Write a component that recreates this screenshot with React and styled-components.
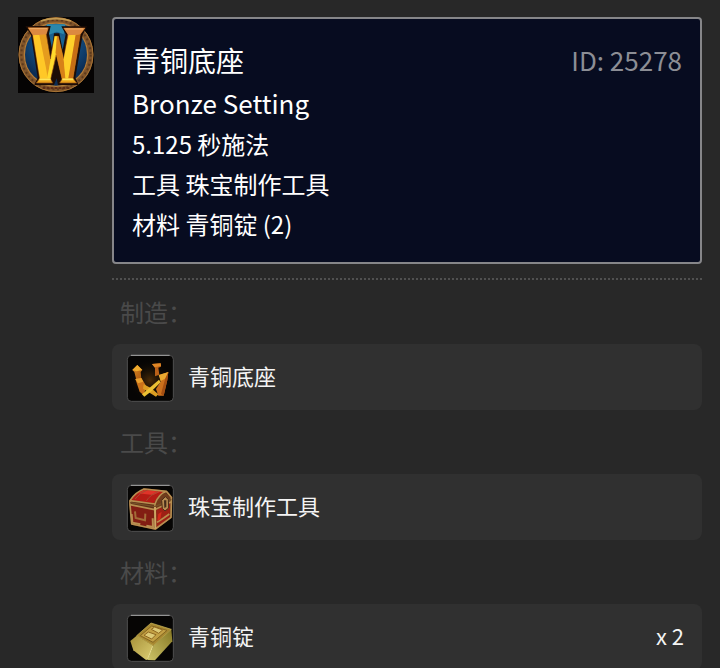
import styled, { createGlobalStyle } from 'styled-components';

const GlobalStyle = createGlobalStyle`
  * {
    box-sizing: border-box;
  }
  body {
    margin: 0;
    background-color: #282828;
    color: #ffffff;
    font-family: 'Noto Sans CJK SC', 'Noto Sans', sans-serif;
  }
`;

const StyledPage = styled.main`
  display: flex;
  align-items: flex-start;
  gap: 18px;
  padding: 17px 18px 0 18px;
`;

const StyledLogo = styled.svg`
  flex: none;
  width: 76px;
  height: 76px;
`;

const StyledContent = styled.div`
  flex: 1;
  min-width: 0;
`;

const StyledTooltip = styled.section`
  padding: 20px 18px 18px 18px;
  border: 2px solid #868689;
  border-radius: 4px;
  background-color: #070c20;
`;

const StyledTooltipHeader = styled.header`
  display: flex;
  justify-content: space-between;
`;

const StyledName = styled.h1`
  margin: 0;
  font-size: 28px;
  font-weight: 400;
  line-height: 42px;
`;

const StyledId = styled.span`
  color: #8c8e95;
  font-size: 26px;
  line-height: 42px;
`;

const StyledEnglishName = styled.p`
  margin: 0;
  font-size: 26px;
  line-height: 43px;
`;

const StyledDetail = styled.p`
  margin: 0;
  font-size: 24px;
  line-height: 40px;
`;

const StyledDivider = styled.hr`
  margin: 14px 0 0 0;
  border: none;
  height: 2px;
  background: repeating-linear-gradient(
    90deg,
    #505050 0 2px,
    transparent 2px 4px
  );
`;

const StyledLabel = styled.h2`
  margin: 0;
  padding: 12px 8px;
  color: #4a4a4a;
  font-size: 24px;
  font-weight: 400;
  line-height: 40px;
`;

const StyledRow = styled.a`
  display: flex;
  align-items: flex-start;
  gap: 14px;
  padding: 10px 18px 8px 14px;
  border-radius: 8px;
  background-color: #303030;
  color: #f4f4f4;
  font-size: 22px;
  line-height: 42px;
  text-decoration: none;
`;

const StyledItemIcon = styled.svg`
  flex: none;
  width: 48px;
  height: 48px;
`;

const StyledItemName = styled.span`
  flex: 1;
`;

function Logo() {
  return (
    <StyledLogo viewBox="6 6 228 228" role="img" aria-label="W">
      <defs>
        <linearGradient id="gold" x1="0" y1="0" x2="0" y2="1">
          <stop offset="0" stopColor="#e08a35" />
          <stop offset="0.3" stopColor="#f0a422" />
          <stop offset="0.7" stopColor="#f9cd22" />
          <stop offset="1" stopColor="#eaa01c" />
        </linearGradient>
        <radialGradient id="sea" cx="0.5" cy="0.3" r="0.6">
          <stop offset="0" stopColor="#1b6c9a" />
          <stop offset="0.6" stopColor="#124a7c" />
          <stop offset="1" stopColor="#0b2d55" />
        </radialGradient>
      </defs>
      <rect x="6" y="6" width="228" height="228" fill="#050303" />
      <circle cx="120" cy="119" r="104" fill="none" stroke="#80542a" strokeWidth="16" />
      <circle cx="120" cy="119" r="104" fill="none" stroke="#5d3b1d" strokeWidth="6" strokeDasharray="6 8" />
      <circle cx="120" cy="119" r="111" fill="none" stroke="#a87435" strokeWidth="3" />
      <circle cx="120" cy="119" r="95" fill="url(#sea)" stroke="#b27b38" strokeWidth="4" />
      <path d="M75 18 Q120 4 165 18" fill="none" stroke="#c39b53" strokeWidth="5" />
      <path d="M92 28 L148 28 L143 58 L122 50 L98 60Z" fill="#2b87ab" />
      <path
        d="M28 33 L104 33 L99 56 L108 100 L114 55 L130 55 L140 104 L149 58 L136 34 L213 34 L200 60 L178 188 L188 210 L126 210 L122 190 L114 210 L55 210 L65 188 L45 60Z"
        fill="#1d0d06"
      />
      <path
        d="M36 38 L97 38 L91 58 L103 132 L116 64 L127 64 L143 132 L156 57 L143 39 L207 39 L193 58 L171 190 L182 204 L131 204 L138 192 L121 120 L104 192 L110 204 L61 204 L71 190 L50 60Z"
        fill="url(#gold)"
        stroke="#8b4812"
        strokeWidth="2"
      />
      <path d="M51 60 L76 60 L94 190 L72 190Z" fill="#ffc827" />
      <path d="M70 60 L88 60 L103 134 L96 188Z" fill="#e59c1e" />
      <path d="M116 64 L123 64 L119 112 L103 190 L93 190 L105 132Z" fill="#ffda2d" />
      <path d="M123 64 L127 64 L143 132 L150 190 L138 191 L119 112Z" fill="#d78218" />
      <path d="M158 60 L179 60 L158 190 L148 190 L143 132Z" fill="#ffd02a" />
      <path d="M179 60 L193 58 L171 190 L157 190Z" fill="#c66e16" />
      <path d="M36 38 L97 38 L91 57 L51 61Z M143 39 L207 39 L193 58 L157 61Z" fill="#dc8940" />
      <path d="M40 41 L93 41 M148 42 L201 42" stroke="#eeb06d" strokeWidth="3" />
      <path d="M70 193 L104 193 M139 193 L172 193" stroke="#ffe75a" strokeWidth="5" />
      <path d="M80 219 L160 219" stroke="#5d2c16" strokeWidth="6" strokeDasharray="8 4" />
    </StyledLogo>
  );
}

// Shared black tile that every item drawing sits on
function ItemIcon({ children }) {
  return (
    <StyledItemIcon viewBox="48 42 144 144" aria-hidden="true">
      <rect x="52" y="46" width="138" height="138" rx="12" fill="#060504" stroke="#505050" strokeWidth="3" />
      <path d="M63 46 L179 46" stroke="#a5a5a5" strokeWidth="3" />
      {children}
    </StyledItemIcon>
  );
}

function SettingIcon() {
  return (
    <ItemIcon>
      <defs>
        <radialGradient id="glow">
          <stop offset="0" stopColor="#4b2c08" />
          <stop offset="1" stopColor="#060504" stopOpacity="0" />
        </radialGradient>
        <linearGradient id="amber" x1="0" y1="0" x2="1" y2="1">
          <stop offset="0" stopColor="#dc8e24" />
          <stop offset="1" stopColor="#a9540f" />
        </linearGradient>
      </defs>
      <ellipse cx="120" cy="121" rx="65" ry="64" fill="url(#glow)" />
      <path d="M67 90 L82 75 L97 90 L92 96 L94 117 L79 119 L73 96Z" fill="url(#amber)" />
      <path d="M67 90 L82 75 L97 90 L80 94Z" fill="#f0ab2d" />
      <path d="M126 72 L152 70 L153 80 L145 83 L148 104 L135 109 L135 84Z" fill="#b96018" />
      <path d="M126 72 L152 70 L153 78 L134 82Z" fill="#df8726" />
      <path d="M76 117 L94 114 L109 139 L101 166 L89 155Z" fill="#cb721a" />
      <path d="M76 117 L94 114 L100 125 L84 130Z" fill="#e9a12f" />
      <path d="M148 105 L175 96 L172 120 L161 167 L145 167 L138 147 L152 125Z" fill="#cb701c" />
      <path d="M146 105 L175 96 L168 115 L152 123Z" fill="#eaa930" />
      <path d="M166 115 L175 96 L172 120 L161 167 L153 162Z" fill="#a34e12" />
      <path d="M101 133 L124 145 L145 163 L138 170 L115 156 L99 146Z" fill="#dc9d22" />
      <path d="M96 163 L147 119 L152 127 L126 152 L103 170Z" fill="#ecc033" />
    </ItemIcon>
  );
}

function ChestIcon() {
  return (
    <ItemIcon>
      <path d="M57 92 L101 54 L171 62 L187 82 L185 143 L136 180 L64 164Z" fill="#5e3018" />
      <path d="M63 91 Q78 62 104 58 L167 65 Q145 73 132 100Z" fill="#b51c15" />
      <path d="M83 70 L104 60 L151 65 L129 75Z" fill="#df3329" />
      <path d="M61 106 L131 120 L132 174 L67 160Z" fill="#821d13" />
      <path d="M139 120 L181 98 L179 143 L139 173Z" fill="#9e2015" />
      <path d="M138 101 Q145 77 166 69 L182 83 L180 95 L139 115Z" fill="#713c1c" />
      <path
        d="M60 92 Q74 68 102 57 L169 64 Q145 73 135 102Z M60 92 L60 104 L134 119 L135 102 M134 119 L184 95 L183 142 L136 177 L65 162 L60 104 M169 64 L184 82 L184 95"
        fill="none"
        stroke="#b78e50"
        strokeWidth="5"
        strokeLinejoin="round"
      />
      <path d="M75 87 Q91 66 112 60 M109 93 Q120 75 144 65" fill="none" stroke="#a34b30" strokeWidth="3" />
      <path d="M60 98 L135 110 L184 88" fill="none" stroke="#755026" strokeWidth="4" />
      <path d="M135 111 L136 176" stroke="#cda563" strokeWidth="6" />
      <path d="M75 124 L77 144 L105 151 L106 131" fill="none" stroke="#a26c38" strokeWidth="6" />
      <path d="M65 132 L67 158 L91 163 M109 167 L129 171 L128 145" fill="none" stroke="#b88d50" strokeWidth="6" />
      <path d="M141 157 L161 144 L178 132" stroke="#b88e4d" strokeWidth="5" />
      <path d="M155 91 L166 80 L175 88 L176 114 L165 123 L157 115Z" fill="#b78b51" stroke="#4c2e18" strokeWidth="3" />
      <path d="M162 91 L169 91 L169 111 L163 114Z" fill="#442c1b" />
      <path d="M145 132 L155 125 L151 148 L142 153Z" fill="#d3291b" />
    </ItemIcon>
  );
}

function IngotIcon() {
  return (
    <ItemIcon>
      <defs>
        <linearGradient id="face" x1="0" y1="0" x2="1" y2="1">
          <stop offset="0" stopColor="#a69038" />
          <stop offset="1" stopColor="#ddcf73" />
        </linearGradient>
        <linearGradient id="side" x1="1" y1="0" x2="0" y2="1">
          <stop offset="0" stopColor="#857724" />
          <stop offset="1" stopColor="#cec468" />
        </linearGradient>
      </defs>
      <path d="M61 123 L80 107 L130 137 L112 180 L107 179 L70 151Z" fill="url(#face)" />
      <path d="M130 137 L184 88 L187 124 L135 181 L112 180Z" fill="url(#side)" />
      <path d="M80 107 L123 69 L184 88 L130 137Z" fill="#a88931" stroke="#cdb95b" strokeWidth="2" />
      <path d="M91 107 L125 78 L171 91 L129 127Z" fill="#c3a044" stroke="#846622" strokeWidth="3" />
      <path d="M102 106 L115 96 L138 104 L125 117Z M124 88 L134 81 L158 90 L146 100Z" fill="#dcc975" stroke="#8f6820" strokeWidth="3" />
      <path d="M128 139 L113 177" stroke="#ebe091" strokeWidth="3" />
    </ItemIcon>
  );
}

const sections = [
  { label: '制造：', name: '青铜底座', Icon: SettingIcon },
  { label: '工具：', name: '珠宝制作工具', Icon: ChestIcon },
  { label: '材料：', name: '青铜锭', Icon: IngotIcon, count: 2 },
];

function App() {
  return (
    <>
      <GlobalStyle />
      <StyledPage>
        <Logo />
        <StyledContent>
          <StyledTooltip>
            <StyledTooltipHeader>
              <StyledName>青铜底座</StyledName>
              <StyledId>ID: 25278</StyledId>
            </StyledTooltipHeader>
            <StyledEnglishName>Bronze Setting</StyledEnglishName>
            <StyledDetail>5.125 秒施法</StyledDetail>
            <StyledDetail>工具 珠宝制作工具</StyledDetail>
            <StyledDetail>材料 青铜锭 (2)</StyledDetail>
          </StyledTooltip>
          <StyledDivider />
          {sections.map(({ label, name, Icon, count }) => (
            <section key={label}>
              <StyledLabel>{label}</StyledLabel>
              <StyledRow href="#">
                <Icon />
                <StyledItemName>{name}</StyledItemName>
                {count && <span>x {count}</span>}
              </StyledRow>
            </section>
          ))}
        </StyledContent>
      </StyledPage>
    </>
  );
}

export default App;
